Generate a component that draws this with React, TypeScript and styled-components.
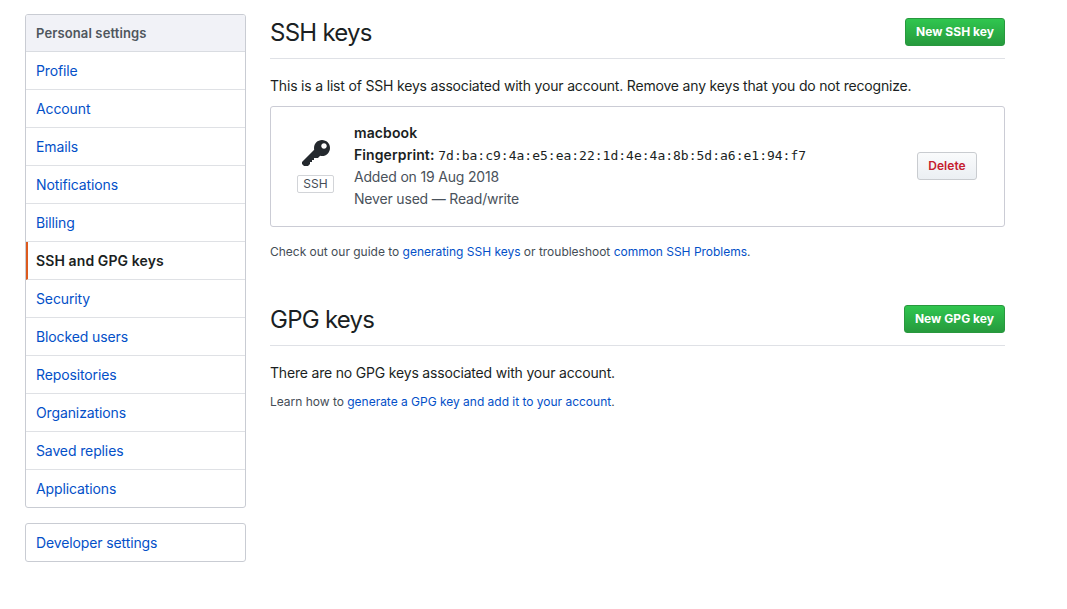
import React from "react";
import styled, { createGlobalStyle } from "styled-components";

const GlobalStyle = createGlobalStyle`
  *, *::before, *::after { box-sizing: border-box; }
  body {
    margin: 0;
    background: #fff;
    color: #1b1f23;
    font-family: Inter, "Liberation Sans", sans-serif;
    font-size: 14px;
    line-height: 22px;
  }
`;

const Page = styled.div`
  display: flex;
  align-items: flex-start;
  gap: 24px;
  width: 1005px;
  padding: 14px 0 0 25px;
`;

const Sidebar = styled.aside`
  display: flex;
  flex-direction: column;
  gap: 15px;
  width: 221px;
  flex: none;
`;

const Menu = styled.nav`
  border: 1px solid #c9ccd3;
  border-radius: 3px;
  overflow: hidden;
`;

const MenuHeading = styled.h3`
  height: 37px;
  margin: 0;
  padding: 0 10px;
  border-bottom: 1px solid #d9dce1;
  background: #f1f2f7;
  color: #4f565d;
  font-size: 13px;
  font-weight: 600;
  letter-spacing: 0.12px;
  line-height: 36px;
`;

const MenuItem = styled.a<{ $active?: boolean }>`
  display: block;
  height: 38px;
  padding-left: ${(p) => (p.$active ? 8 : 10)}px;
  border-bottom: 1px solid #dfe1e5;
  border-left: ${(p) => (p.$active ? "2px solid #dc5a1e" : "0")};
  color: ${(p) => (p.$active ? "#1b1f23" : "#0350c8")};
  font-weight: ${(p) => (p.$active ? 600 : 400)};
  letter-spacing: ${(p) => (p.$active ? 0.1 : -0.12)}px;
  line-height: 37px;
  text-decoration: none;
  white-space: nowrap;
  &:last-child {
    height: 37px;
    border-bottom: 0;
  }
`;

const Main = styled.main`
  width: 735px;
  flex: none;
`;

const Section = styled.section`
  & + & { margin-top: 40px; }
`;

const SectionHeader = styled.header`
  display: flex;
  align-items: flex-start;
  justify-content: space-between;
  height: 45px;
  padding-top: 4px;
  border-bottom: 1px solid #dfe1e6;
`;

const Title = styled.h2`
  margin: 0;
  font-size: 24px;
  font-weight: 400;
  letter-spacing: -0.75px;
  line-height: 29px;
`;

const Button = styled.button<{ $kind: "primary" | "danger"; $width: number }>`
  width: ${(p) => p.$width}px;
  height: 28px;
  padding: 0;
  border: 1px solid ${(p) => (p.$kind === "primary" ? "#28983e" : "#c9ccd0")};
  border-radius: 3px;
  background: ${(p) =>
    p.$kind === "primary"
      ? "linear-gradient(#30c64f, #269a3d)"
      : "linear-gradient(#fafbfc, #ebeff3)"};
  color: ${(p) => (p.$kind === "primary" ? "#fff" : "#c5202f")};
  font-family: inherit;
  font-size: 12px;
  font-weight: ${(p) => (p.$kind === "primary" ? 700 : 600)};
  letter-spacing: 0.05px;
  line-height: 26px;
  white-space: nowrap;
`;

const Lead = styled.p`
  margin: 16px 0 0;
  letter-spacing: -0.185px;
  white-space: nowrap;
`;

const KeyCard = styled.article`
  display: flex;
  align-items: center;
  height: 121px;
  margin-top: 9px;
  padding: 0 27px 1px 26px;
  border: 1px solid #cbccd5;
  border-radius: 3px;
`;

const KeyBadge = styled.div`
  display: flex;
  flex-direction: column;
  align-items: center;
  width: 37px;
  height: 56px;
  svg { display: block; fill: #24292e; }
`;

const KeyType = styled.span`
  width: 37px;
  height: 18px;
  margin-top: 5px;
  border: 1px solid #d2d4d8;
  border-radius: 2px;
  color: #444d56;
  font-size: 12px;
  line-height: 16px;
  text-align: center;
`;

const KeyDetails = styled.div`
  display: flex;
  flex: 1;
  flex-direction: column;
  margin-left: 20px;
  color: #4a525b;
  letter-spacing: -0.18px;
  white-space: nowrap;
  & > * { height: 22px; }
`;

const Strong = styled.strong`
  color: #1b1f23;
  font-weight: 600;
  letter-spacing: 0.1px;
`;

const Fingerprint = styled.code`
  color: #1b1f23;
  font-family: "DejaVu Sans Mono", monospace;
  font-size: 13px;
  letter-spacing: 0;
`;

const Note = styled.p<{ $gap: number }>`
  margin: ${(p) => p.$gap}px 0 0;
  color: #444d56;
  font-size: 12px;
  letter-spacing: -0.015px;
  line-height: 18px;
  white-space: nowrap;
  a { color: #0350c8; text-decoration: none; }
`;

const items = [
  "Profile", "Account", "Emails", "Notifications", "Billing", "SSH and GPG keys",
  "Security", "Blocked users", "Repositories", "Organizations", "Saved replies", "Applications",
];

export default function App() {
  return (
    <Page>
      <GlobalStyle />
      <Sidebar>
        <Menu>
          <MenuHeading>Personal settings</MenuHeading>
          {items.map((item) => (
            <MenuItem key={item} $active={item === "SSH and GPG keys"}>{item}</MenuItem>
          ))}
        </Menu>
        <Menu>
          <MenuItem>Developer settings</MenuItem>
        </Menu>
      </Sidebar>
      <Main>
        <Section>
          <SectionHeader>
            <Title>SSH keys</Title>
            <Button $kind="primary" $width={100}>New SSH key</Button>
          </SectionHeader>
          <Lead>
            This is a list of SSH keys associated with your account. Remove any keys that you do not recognize.
          </Lead>
          <KeyCard>
            <KeyBadge>
              <svg width="28" height="32" viewBox="0 0 14 16" aria-hidden="true">
                <path fillRule="evenodd" d="M12.83 2.17C12.08 1.42 11.14 1.03 10 1c-1.13.03-2.08.42-2.83 1.17S6.04 3.86 6.01 5c0 .3.03.59.09.89L0 12v1l1 1h2l1-1v-1h1v-1h1v-1h2l1.09-1.11c.3.08.59.11.91.11 1.14-.03 2.08-.42 2.83-1.17S13.97 6.14 14 5c-.03-1.14-.42-2.08-1.17-2.83zM11 5.38c-.77 0-1.38-.61-1.38-1.38 0-.77.61-1.38 1.38-1.38.77 0 1.38.61 1.38 1.38 0 .77-.61 1.38-1.38 1.38z" />
              </svg>
              <KeyType>SSH</KeyType>
            </KeyBadge>
            <KeyDetails>
              <Strong>macbook</Strong>
              <span>
                <Strong>Fingerprint:</Strong>{" "}
                <Fingerprint>7d:ba:c9:4a:e5:ea:22:1d:4e:4a:8b:5d:a6:e1:94:f7</Fingerprint>
              </span>
              <span>Added on 19 Aug 2018</span>
              <span>Never used — Read/write</span>
            </KeyDetails>
            <Button $kind="danger" $width={60}>Delete</Button>
          </KeyCard>
          <Note $gap={16}>
            Check out our guide to <a>generating SSH keys</a> or troubleshoot <a>common SSH Problems</a>.
          </Note>
        </Section>
        <Section>
          <SectionHeader>
            <Title>GPG keys</Title>
            <Button $kind="primary" $width={101}>New GPG key</Button>
          </SectionHeader>
          <Lead>There are no GPG keys associated with your account.</Lead>
          <Note $gap={9}>
            Learn how to <a>generate a GPG key and add it to your account</a>.
          </Note>
        </Section>
      </Main>
    </Page>
  );
}
